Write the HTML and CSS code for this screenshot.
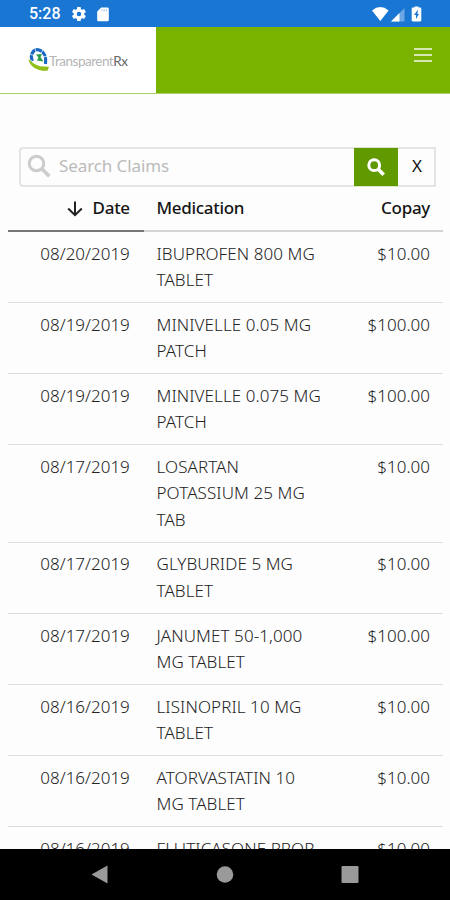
FILE: index.html
```html
<!DOCTYPE html>
<html lang="en">
<head>
<meta charset="utf-8">
<title>TransparentRx Claims</title>
<link rel="stylesheet" href="styles.css">
</head>
<body>
<div class="phone">
  <div class="status">
    <span class="time">5:28</span>
    <svg class="gear" width="14" height="14" viewBox="2 2 20 20"><path fill="#fff" d="M19.4 13a7.500 7.500 0 0 0 0-2l2.100-1.600c.2-.2.200-.4.100-.6l-2-3.500c-.1-.2-.4-.3-.6-.2l-2.500 1a7.300 7.300 0 0 0-1.700-1L14.400 2.400c0-.2-.2-.4-.5-.4h-4c-.2 0-.4.200-.5.400L9 5.100a8 8 0 0 0-1.700 1l-2.500-1c-.2-.1-.5 0-.6.200l-2 3.500c-.1.200-.1.500.1.600L4.500 11a8 8 0 0 0 0 2l-2.200 1.600c-.2.200-.2.400-.1.600l2 3.500c.1.200.4.300.6.200l2.500-1a7.300 7.300 0 0 0 1.700 1l.4 2.700c0 .2.200.4.500.4h4c.3 0 .5-.2.500-.4l.4-2.700a8 8 0 0 0 1.700-1l2.500 1c.2.100.5 0 .6-.2l2-3.500c.1-.2.100-.5-.1-.6zM12 15.200a3.200 3.200 0 1 1 0-6.400 3.200 3.200 0 0 1 0 6.400z"/></svg>
    <svg class="card" width="12" height="15" viewBox="0 0 12 15"><path fill="#fff" d="M4.200.5H10.500a1.300 1.300 0 0 1 1.300 1.300V13a1.300 1.300 0 0 1-1.300 1.300H1.500A1.300 1.300 0 0 1 .2 13V4.500z"/><path stroke="#a9caee" d="M5 2v2.500M7.200 2v2.500M9.400 2v2.500"/></svg>
    <svg class="signals" width="54" height="17" viewBox="0 0 54 17"><path fill="#fff" d="M1 4.500Q9.300-2.300 17.600 4.500L9.300 15z"/><path fill="#6aa6e4" d="M20 15.500 33.500 2v13.500z"/><path fill="#fff" d="M20 15.500 28.500 7v8.500z"/><path fill="#fff" d="M43.500 1.500V.5h4v1h1.600c.7 0 1.200.5 1.200 1.200v11.600c0 .7-.5 1.200-1.200 1.200h-7.200c-.7 0-1.200-.5-1.200-1.200V2.700c0-.7.500-1.200 1.200-1.200z"/><path fill="#1976d2" d="m47 3.500-4 5.500h2v4l3-5h-1.600z"/></svg>
  </div>
  <header class="top">
    <div class="brand">
      <svg width="22" height="25" viewBox="0 0 22 25"><path fill="none" stroke="#1b68c4" stroke-width="3.200" d="M4.500 14C1.500 8 5.500 1.500 11 3c5 1.500 7.500 7 6.500 14"/><path fill="none" stroke="#fff" stroke-width=".7" d="m1 7 5 1.500M7 1l1 4M15 3l-2 3M20 9l-5 1"/><path fill="#289c45" d="M8 7.500l6-.5-1.500 3 3 4.500-6.500-1 1.500-3z"/><path fill="#90bf18" d="M.5 12c4 3.500 6.500 7.500 20.500 7.800l-1.500 4C10 24.500 1.500 20 .5 12z"/><path fill="none" stroke="#fff" stroke-width=".7" d="M3 13c4 5 9 6 12 6"/></svg>
      <span class="name">Transparent<b>Rx</b></span>
    </div>
    <div class="menu"><i></i><i></i><i></i></div>
  </header>
  <main>
    <div class="search">
      <div class="field">
        <svg width="24" height="24" viewBox="0 0 24 24"><circle cx="9.500" cy="9.500" r="7.300" fill="none" stroke="#ccc" stroke-width="3"/><path stroke="#ccc" stroke-width="3.600" d="m14.800 14.800 7.500 7.500"/></svg>
        <span>Search Claims</span>
      </div>
      <div class="go"><svg width="18" height="18" viewBox="0 0 18 18"><circle cx="7.200" cy="7.200" r="5.400" fill="none" stroke="#fff" stroke-width="3"/><path stroke="#fff" stroke-width="3.600" d="m11 11 5.700 5.700"/></svg></div>
      <div class="clear">X</div>
    </div>
    <div class="head">
      <div class="date"><svg width="16" height="16" viewBox="0 0 16 16"><path fill="none" stroke="#222" stroke-width="2" d="M8 .5V14M1.200 7.500 8 14.200l6.800-6.700"/></svg><span>Date</span></div>
      <div class="med">Medication</div><div class="pay">Copay</div>
    </div>
    <div class="row"><div class="date">08/20/2019</div><div class="med">IBUPROFEN 800 MG<br>TABLET</div><div class="pay">$10.00</div></div>
    <div class="row"><div class="date">08/19/2019</div><div class="med">MINIVELLE 0.05 MG<br>PATCH</div><div class="pay">$100.00</div></div>
    <div class="row"><div class="date">08/19/2019</div><div class="med">MINIVELLE 0.075 MG<br>PATCH</div><div class="pay">$100.00</div></div>
    <div class="row"><div class="date">08/17/2019</div><div class="med">LOSARTAN<br>POTASSIUM 25 MG<br>TAB</div><div class="pay">$10.00</div></div>
    <div class="row"><div class="date">08/17/2019</div><div class="med">GLYBURIDE 5 MG<br>TABLET</div><div class="pay">$10.00</div></div>
    <div class="row"><div class="date">08/17/2019</div><div class="med">JANUMET 50-1,000<br>MG TABLET</div><div class="pay">$100.00</div></div>
    <div class="row"><div class="date">08/16/2019</div><div class="med">LISINOPRIL 10 MG<br>TABLET</div><div class="pay">$10.00</div></div>
    <div class="row"><div class="date">08/16/2019</div><div class="med">ATORVASTATIN 10<br>MG TABLET</div><div class="pay">$10.00</div></div>
    <div class="row"><div class="date">08/16/2019</div><div class="med">FLUTICASONE PROP</div><div class="pay">$10.00</div></div>
  </main>
  <nav><svg width="450" height="51" viewBox="0 0 450 51"><path fill="#9a9a9a" d="M91.500 25.500 107.500 16.500v18z"/><circle cx="225" cy="25.500" r="8.300" fill="#9a9a9a"/><rect x="341.500" y="17" width="17" height="17" rx="1" fill="#9a9a9a"/></svg></nav>
</div>
</body>
</html>
```
FILE: styles.css
```css
* { box-sizing: border-box; }
body { margin: 0; background: #fdfdfd; font-family: "Noto Sans", sans-serif; }
.phone { width: 450px; height: 900px; display: flex; flex-direction: column; overflow: hidden; background: #fdfdfd; }
.status { flex: none; height: 27px; background: #1976d2; display: flex; align-items: center; padding: 1px 25px 0 29px; color: #fff; }
.time { width: 43px; font: 500 16px/26px Roboto, sans-serif; }
.card { margin-left: 11px; }
.signals { margin-left: auto; }
.top { flex: none; height: 67px; display: flex; justify-content: space-between; background: #7ab200; border-bottom: 1px solid #a9cf66; }
.brand { width: 156px; background: #fff; display: flex; align-items: center; padding: 0 0 2px 28px; }
.brand svg { flex: none; }
.name { font: 400 13.5px/20px Lato, sans-serif; color: #b5b5b5; letter-spacing: -.5px; margin: 3px 0 0 -1px; }
.name b { font-weight: 400; color: #666; }
.menu { width: 18px; margin: 21px 18px 0 0; display: flex; flex-direction: column; gap: 4px; }
.menu i { height: 2px; background: #d5e8b0; }
main { flex: 1; min-height: 0; overflow: hidden; padding: 53px 7px 0 8px; }
.search { display: flex; height: 40px; margin: 0 0 0 11px; width: 417px; }
.field { flex: 1; display: flex; align-items: center; gap: 8px; padding: 0 0 3px 6px; border: 2px solid #e4e4e4; border-right: 0; border-radius: 4px 0 0 4px; color: #bbb; font-size: 17px; letter-spacing: -.1px; }
.go { width: 44px; background: #609a00; display: flex; align-items: center; justify-content: center; border: solid #dbe6c8; border-width: 1px 0; }
.clear { width: 38px; border: 2px solid #e4e4e4; border-left: 0; display: flex; align-items: center; justify-content: center; padding: 0 0 3px 2px; font-size: 17px; color: #111; }
.head, .row { display: grid; grid-template-columns: 135.5px 1fr 120px; line-height: 26.260px; white-space: nowrap; }
.head { height: 45px; font-size: 17px; font-weight: 500; letter-spacing: -.3px; color: #151515; }
.head > div { padding-top: 7.500px; border-bottom: 2px solid #d4d4d4; }
.head .date { display: flex; justify-content: flex-end; gap: 10px; border-color: #777; }
.head .date svg { margin-top: 6px; }
.row { font-size: 17px; font-weight: 300; color: #222; padding: 8.700px 0 8.900px; border-bottom: 1px solid #ddd; }
.date { text-align: right; padding-right: 13.700px; }
.med { padding-left: 13px; }
.row .med { letter-spacing: .08px; }
.pay { text-align: right; padding-right: 13px; }
nav { flex: none; height: 51px; background: #000; }
nav svg { display: block; }
```
